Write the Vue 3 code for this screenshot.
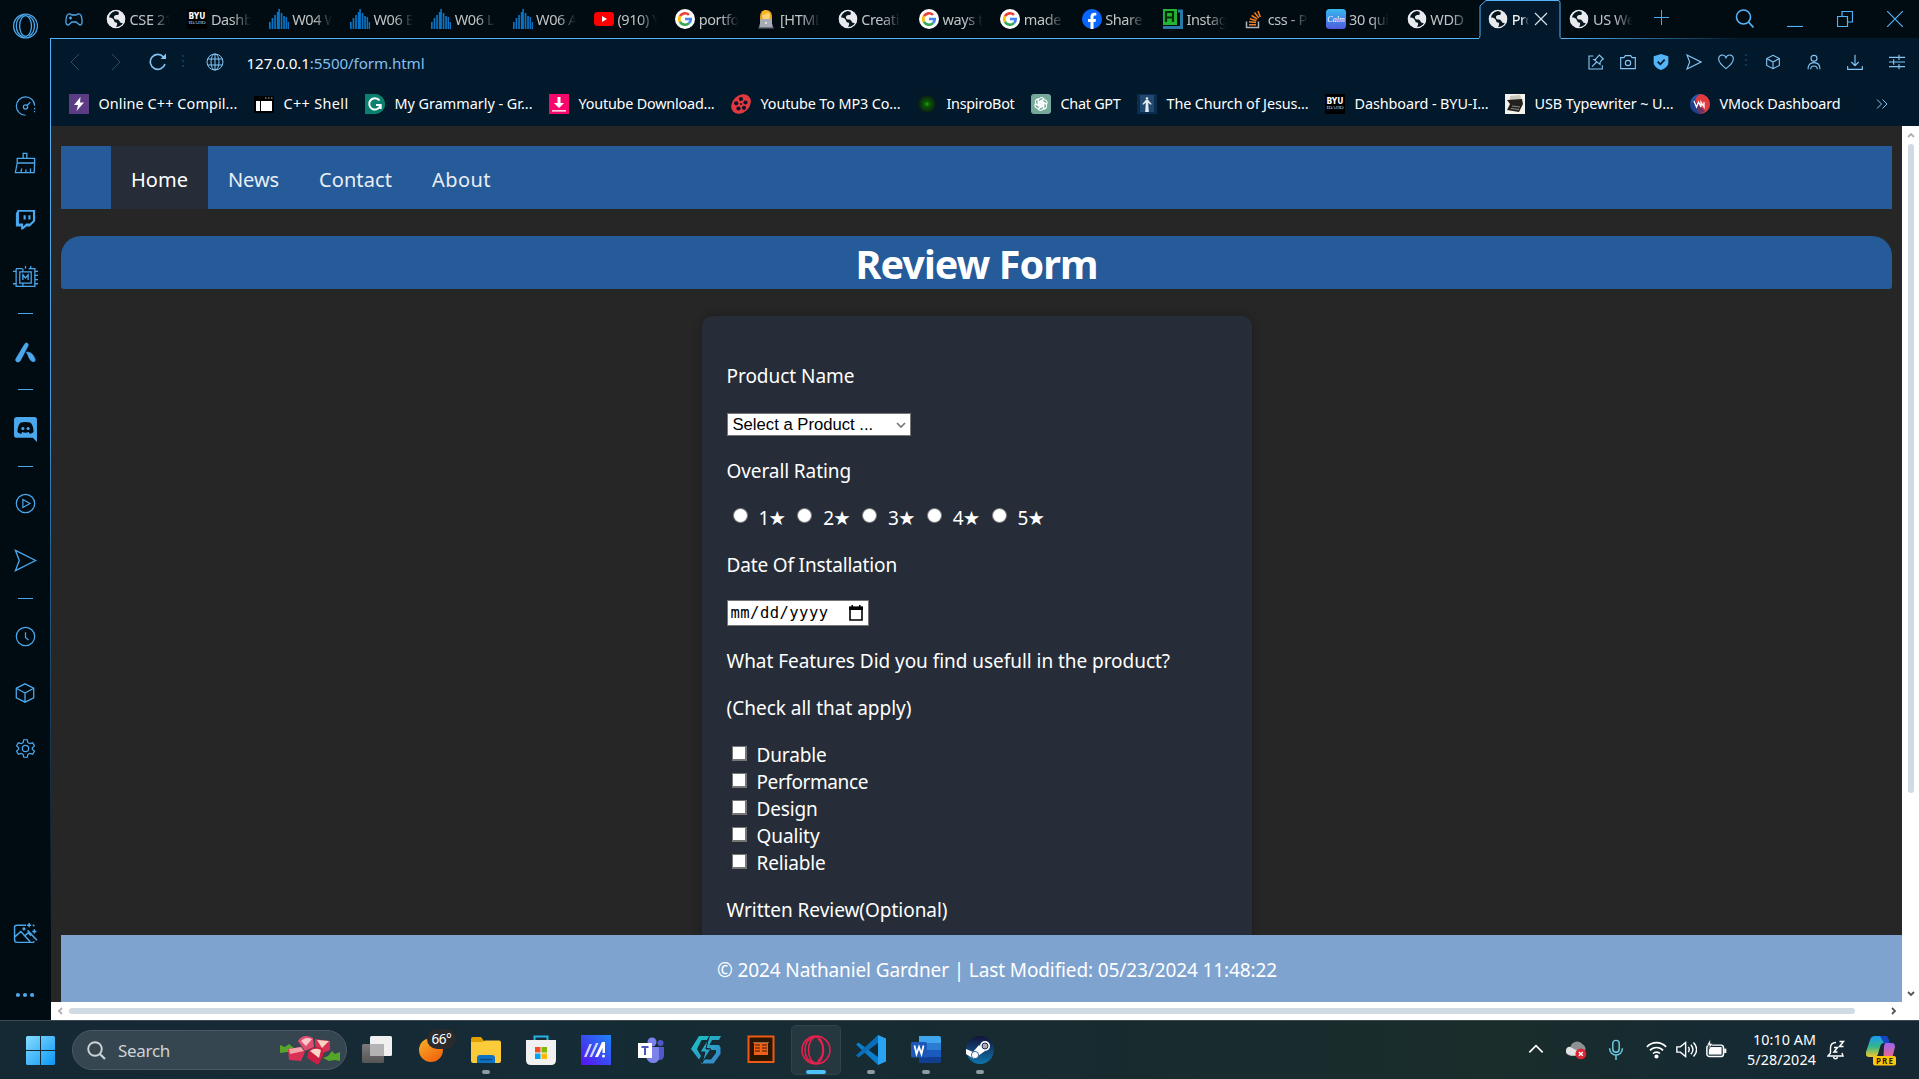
<script setup>
// Spreads a text over the given advance width by adjusting its tracking
const vFit = {
  mounted(el, { value }) {
    const natural = el.getBoundingClientRect().width
    el.style.letterSpacing = (value - natural) / el.textContent.length + 'px'
  },
}

const world = '<circle cx="10" cy="10" r="9" fill="#e8eaed"/><path d="M9 2c-3 1-5.500 3.500-6 6.500 2 0 3.500.5 4.500 2s.5 3 2.500 3c1.500 0 1.500 2 .5 3.500l-.5 1.500c3.500 0 6-2 7.300-4.500-1.800.2-3.300-.3-3.800-1.800-.5-1.300-2-1.700-3.500-1.700S7.500 9 8 7.500 10 6 11.500 6 13 4.500 12.500 2.800C11.500 2 10 1.800 9 2z" fill="#06141d"/><circle cx="10" cy="10" r="8.700" fill="none" stroke="#e8eaed" stroke-width="1.200"/>'
const byu = '<path d="M0 0h20v20H0z" fill="#000"/><text x="10" y="9.500" text-anchor="middle" font-size="8" font-weight="700" font-family="DejaVu Sans, sans-serif" fill="#fff" textLength="17" lengthAdjust="spacingAndGlyphs">BYU</text><text x="10" y="15" text-anchor="middle" font-size="5" font-family="Liberation Serif, serif" fill="#ddd" textLength="17" lengthAdjust="spacingAndGlyphs">IDAHO</text>'
const bars = '<path d="M0 13h1.700v7H0zM2.600 9h1.700v11H2.600zM5.200 6h1.700v14H5.200zM7.800 3h1.500v17H7.800zM9.300 0h1.600v20H9.300zM11.700 4h1.700v16h-1.700zM14.200 7h1.700v13h-1.700zM16.600 8h1.500v12h-1.500zM18.700 13h1.300v7h-1.300z" fill="#0a73c4"/>'
const google = '<circle cx="10" cy="10" r="10" fill="#fff"/><g fill="none" stroke-width="2.700"><path d="M14 5.900A5.700 5.700 0 0 0 5 7.200" stroke="#ea4335"/><path d="M5 7.200a5.700 5.700 0 0 0 0 5.600" stroke="#fbbc05"/><path d="M5 12.800a5.700 5.700 0 0 0 9 1.300" stroke="#34a853"/><path d="M14 14.100A5.600 5.600 0 0 0 15.700 10H10" stroke="#4285f4"/></g>'

const tabs = [
  { t: 'CSE 21', i: world },
  { t: 'Dashb', i: byu },
  { t: 'W04 W', i: bars },
  { t: 'W06 E', i: bars },
  { t: 'W06 L', i: bars },
  { t: 'W06 A', i: bars },
  { t: '(910) Y', i: '<rect x="0" y="3" width="20" height="14" rx="3.500" fill="#f00"/><path d="M8 7v6l5-3z" fill="#fff"/>' },
  { t: 'portfo', i: google },
  { t: '[HTML', i: '<path d="M4 18V8c0-4 2-7 6-7s6 3 6 7v10z" fill="#e9a21b"/><circle cx="10" cy="7" r="4" fill="#ffd479"/><path d="M6 6c3 0 5-1 6-3l2.500 3L14 3 9 1 6 3z" fill="#f6b622"/><path d="M3 18c0-4 3-6 7-6s7 2 7 6z" fill="#8a6fb0"/><rect x="4" y="10" width="12" height="8" rx="1" fill="#a7adb3"/><path d="M2.500 18h15v1.500h-15z" fill="#6d7378"/><circle cx="10" cy="14" r="1" fill="#eee"/>' },
  { t: 'Creati', i: world },
  { t: 'ways t', i: google },
  { t: 'made', i: google },
  { t: 'Share', i: '<circle cx="10" cy="10" r="10" fill="#0866ff"/><path d="M8.500 20v-7H6v-3h2.500V8c0-3 1.500-4.200 4-4.200.8 0 1.400.1 1.800.2v2.600h-1.200c-1.200 0-1.600.5-1.600 1.500V10H14l-.5 3h-2v7z" fill="#fff"/>' },
  { t: 'Instag', i: '<path d="M0 0h14v16H0z" fill="#22b52f"/><path d="M3 13V3h7v10M3 8.500h7" fill="none" stroke="#042a0a" stroke-width="2.200"/><path d="M15 2h3.500v16.500H0" fill="none" stroke="#2878a8" stroke-width="3"/>' },
  { t: 'css - P', i: '<path d="M2.500 12.500v6h12v-6" fill="none" stroke="#aeb3b6" stroke-width="1.500"/><path d="M5 15.700h7M5 12.800l7 .8M5.800 9.700l6.600 2M7.600 6.500l5.800 3.700M10.500 3.500l4.300 5.400M14 2l2.300 6" stroke="#f48024" stroke-width="1.500"/>' },
  { t: '30 qui', i: '<defs><linearGradient id="calm" x2="0" y2="1"><stop stop-color="#38b9ee"/><stop offset="1" stop-color="#4d5cdf"/></linearGradient></defs><rect width="20" height="20" rx="3.500" fill="url(#calm)"/><text x="10" y="13" text-anchor="middle" font-size="8" font-style="italic" font-family="Liberation Serif, serif" fill="#fff">Calm</text>' },
  { t: 'WDD', i: world },
  { t: 'Pro', i: world, active: true },
  { t: 'US We', i: world },
]

const bookmarks = [
  { t: 'Online C++ Compil...', w: 139, i: '<path d="M0 0h20v20H0z" fill="#5c3d84"/><path d="M11.500 3L5 11h4l-1.500 6L15 8.500h-4z" fill="#fff"/>' },
  { t: 'C++ Shell', w: 65, i: '<rect y="2" width="20" height="17" rx="1" fill="#000"/><path d="M2 7h4v10H2zM7 7h11v10H7z" fill="#fff"/><path d="M11 4h1.500M14 4h1.500M17 4h1.500" stroke="#bbb"/>' },
  { t: 'My Grammarly - Gr...', w: 138, i: '<path d="M0 0h10a10 10 0 0 1 0 20H0z" fill="#0a8070"/><circle cx="10" cy="10" r="10" fill="#0a8070"/><path d="M14.500 6.500A5.700 5.700 0 1 0 15.500 11H11M15.700 11v4" fill="none" stroke="#fff" stroke-width="2"/>' },
  { t: 'Youtube Download...', w: 136, i: '<path d="M0 0h20v20H0z" fill="#f7066b"/><path d="M8.500 3h3v6H15l-5 5-5-5h3.500z" fill="#fff"/><path d="M3 16h14v1.700H3z" fill="#ffc9df"/>' },
  { t: 'Youtube To MP3 Co...', w: 140, i: '<ellipse cx="10" cy="10" rx="11" ry="8.500" transform="rotate(-45 10 10)" fill="#e2383f"/><g fill="#03192b"><circle cx="10" cy="5" r="2.100"/><circle cx="14.500" cy="8.500" r="2.100"/><circle cx="13" cy="13.800" r="2.100"/><circle cx="7.500" cy="14.500" r="2.100"/><circle cx="5.200" cy="9.300" r="2.100"/><circle cx="10" cy="10" r="1"/></g>' },
  { t: 'InspiroBot', w: 68, i: '<defs><radialGradient id="eye"><stop stop-color="#14b800"/><stop offset=".25" stop-color="#0d5d0a"/><stop offset="1" stop-color="#0c1913"/></radialGradient></defs><circle cx="10" cy="10" r="9" fill="url(#eye)"/>' },
  { t: 'Chat GPT', w: 60, i: '<rect width="20" height="20" rx="3" fill="#75a99b"/><g fill="none" stroke="#fff" stroke-width="1.100"><path d="M7.500 12V6.500a3 3 0 0 1 5.500-1.500l-4 2.300V12"/><path id="petal" d="M7.500 12V6.500a3 3 0 0 1 5.500-1.500l-4 2.300V12" transform="rotate(60 10 10)"/><path d="M7.500 12V6.500a3 3 0 0 1 5.500-1.500l-4 2.300V12" transform="rotate(120 10 10)"/><path d="M7.500 12V6.500a3 3 0 0 1 5.500-1.500l-4 2.300V12" transform="rotate(180 10 10)"/><path d="M7.500 12V6.500a3 3 0 0 1 5.500-1.500l-4 2.300V12" transform="rotate(240 10 10)"/><path d="M7.500 12V6.500a3 3 0 0 1 5.500-1.500l-4 2.300V12" transform="rotate(300 10 10)"/></g>' },
  { t: 'The Church of Jesus...', w: 142, i: '<path d="M0 0h20v20H0z" fill="#0b2c50"/><path d="M3 1h14v17H3z" fill="#21496f"/><circle cx="10" cy="4.500" r="1.300" fill="#e4ebf2"/><path d="M8.800 6h2.400l3.500 4-.8.8-2.700-2L11.800 18H8.200l.6-9.200-2.700 2-.8-.8z" fill="#e4ebf2"/>' },
  { t: 'Dashboard - BYU-I...', w: 134, i: byu },
  { t: 'USB Typewriter ~ U...', w: 139, i: '<path d="M0 0h20v20H0z" fill="#f5f3ee"/><path d="M5 2l10-1 2 5-12 2z" fill="#ccc8bb"/><path d="M2 6l15-1 1 5-4 8-12-2 3-6z" fill="#22211f"/><path d="M7 12l8 1M6 14.500l8 1" stroke="#8f8b80"/>' },
  { t: 'VMock Dashboard', w: 121, i: '<circle cx="10" cy="10" r="10" fill="#2557a5"/><path d="M10 0a10 10 0 0 1 0 20C6 16 7 12 6 8S7 2 10 0z" fill="#e23a3d"/><path d="M0 9l5-2 10 10-4 3C5 20 0 16 0 9z" fill="#1e2f7a" opacity=".6"/><path d="M4 7l2.500 6L8.500 8l2.500 5V8l3 5V8" fill="none" stroke="#fff" stroke-width="1.300"/>' },
]

const cube = '<path d="M12 2l9.500 4.800v10.400L12 22l-9.500-4.800V6.800zM2.500 6.800L12 12l9.500-5.200M12 12v10"/>'
const send = '<path d="M1.500 1.500L22.500 12 1.500 22.500 5.500 12z"/>'

// Sidebar entries: y is the centre of the glyph, s its size
const side = [
  { y: 25.5, s: 26, i: '<g stroke-width="1.200"><ellipse cx="12.500" cy="12" rx="11" ry="11"/><ellipse cx="12.500" cy="12" rx="5.500" ry="9.500"/><path d="M10.500 1.500C5.500 4 4 8 4 12s1.500 8 6.500 10.500M15.500 2.500c7 4 7 15 0 19"/></g>' },
  { y: 106, s: 21, i: '<path d="M12 22A10.500 10.500 0 1 1 22.500 11"/><path d="M22.500 13.500v2M22.300 17v1.500" /><circle cx="12" cy="12.500" r="2.400"/><path d="M13.800 10.800L17.500 7"/>' },
  { y: 163, s: 22, i: '<path d="M10 7V1.500h4V7M3.500 7h19v5h-19zM3.500 12L1.500 22.500h20.500L22.500 12M7.500 22l1-4M13 22v-3M18 22v-4"/>' },
  { y: 219, s: 21, i: '<path d="M3 1h20v13l-6 6h-4l-4 3.500H7V20H1V5zM4.500 3v13.500h4.800V20l3.500-3.500H17l3.500-3.500V3z" fill="currentColor" fill-rule="evenodd" stroke="none"/><path d="M11 7v5M16.500 7v5" stroke-width="2.400"/>' },
  { y: 277, s: 25, i: '<g stroke-width="1.200"><path d="M3 3.500h6M15 3.500h6v17H3v-17M6.500 6.500h11v11h-11zM9.500 3.500v3M9.500 17.500v3"/><path d="M0 6h3M0 18h3M21 6h3M21 10h3M21 14h3M21 18h3M12 3.500V1M17 3.500V1"/></g><path d="M9.500 14.500v-5l2.500 3 2.500-3v5" stroke-width="1.300"/>' },
  { y: 313, line: true },
  { y: 352, s: 21, i: '<path d="M11 2.500c1-2 3.500-2 4 .3.2 1-.2 2-.8 3L6.500 20.500c-1.200 2.300-3 2.800-4.500 2-1.700-1-1.500-2.500-.6-4zM13 11.500c5-.5 8.500 3.500 10 8.500.6 2.500-2 3-4 1.800-3-1.700-3.500-6.500-6-10.300z" fill="currentColor" stroke="currentColor" stroke-width=".8"/>' },
  { y: 389, line: true },
  { y: 429, s: 25, i: '<path d="M4 0h16.500Q23 0 23 2.500V24l-4-4H4Q1 20 1 17.500V2.500Q1 0 4 0z" fill="currentColor" stroke="none"/><path d="M7 5.500c3-1 7-1 10 0 2 2.500 2.800 5.500 2.700 9-1.200 1-2.200 1.500-3.500 1.700l-1-1.700c-2 .7-4.500.7-6.400 0l-1 1.700c-1.300-.2-2.300-.7-3.500-1.700 0-3.500.7-6.500 2.700-9z" fill="#000b12" stroke="none"/><circle cx="9.500" cy="11" r="1.500" fill="currentColor" stroke="none"/><circle cx="14.500" cy="11" r="1.500" fill="currentColor" stroke="none"/>' },
  { y: 466, line: true },
  { y: 503, s: 21, i: '<circle cx="12" cy="12" r="10.500"/><path d="M9 7.500l8 4.500-8 4.500z"/>' },
  { y: 560, s: 23, i: send },
  { y: 598, line: true },
  { y: 636, s: 21, i: '<circle cx="12" cy="12" r="10.500"/><path d="M12 7v6l3.500 3"/>' },
  { y: 693, s: 22, i: cube },
  { y: 748, s: 21, i: '<path d="M10 2h4l.7 3.200 2.300 1.300 3.200-1 2 3.500-2.400 2.200v1.600l2.400 2.200-2 3.500-3.200-1-2.300 1.300L14 22h-4l-.7-3.200L7 17.500l-3.200 1-2-3.500 2.400-2.200v-1.600L1.800 9l2-3.500 3.200 1 2.300-1.300z"/><circle cx="12" cy="12" r="3.600"/>' },
  { y: 933.5, s: 25, i: '<path d="M12.500 4H4Q1.500 4 1.500 6v12q0 2.500 2.500 2.500h14.500q1.500 0 2-1M2 15l5.500-5 9 10M11.500 14l3-2.500 3 2.500M14 9l9 9.500"/><circle cx="10.500" cy="7.500" r=".8"/><path d="M15.500 2v4M13.500 4h4M20.500 8v4M18.500 10h4M19 3.500l1.500 1.500"/>' },
  { y: 995, s: 20, i: '<g fill="currentColor" stroke="none"><circle cx="3.500" cy="12" r="2.500"/><circle cx="12" cy="12" r="2.500"/><circle cx="20.500" cy="12" r="2.500"/></g>' },
]

const tools = [
  { x: 1588, i: '<path d="M8 3H1.500v19.500h20V17M11 8l6-6.500 6 6-2 1-3 4v3L9 8.500h3zM13 12l-7 7"/>' },
  { x: 1620, i: '<path d="M1 5.500h5l2-3h8l2 3h5V22H1z"/><circle cx="12" cy="13.500" r="4"/>' },
  { x: 1653, i: '<path d="M12 0l11 3.500V13c0 5-5 8.500-11 11C6 21.500 1 18 1 13V3.500z" fill="currentColor" stroke="none"/><path d="M7 11.500l4 4 6.500-7" stroke="#02182b" stroke-width="2.600"/>' },
  { x: 1686, i: send },
  { x: 1718, i: '<path d="M12 22C5 16.500 1 12 1 7.500 1 .5 9.500-.5 12 5.500 14.500-.5 23 .5 23 7.500 23 12 19 16.500 12 22z"/>' },
  { x: 1745, dots: true },
  { x: 1765, i: cube },
  { x: 1806, i: '<circle cx="12" cy="6.500" r="4.500"/><path d="M3 23c0-7 3.500-10 9-10s9 3 9 10M7 23c0-3 1.500-5 5-5s5 2 5 5"/>' },
  { x: 1847, i: '<path d="M12 1v16M6.500 12l5.500 5.500 5.500-5.500M1 18v5h22v-5"/>' },
  { x: 1889, i: '<path d="M0 5h24M0 12h24M0 19h24M15 1v8M7 8v8M15 15v8"/>' },
]

const nav = [
  { t: 'Home', w: 57, on: true },
  { t: 'News', w: 51 },
  { t: 'Contact', w: 73 },
  { t: 'About', w: 59 },
]
const features = [
  { t: 'Durable', w: 70 },
  { t: 'Performance', w: 111.5 },
  { t: 'Design', w: 61 },
  { t: 'Quality', w: 63 },
  { t: 'Reliable', w: 69 },
]

const apps = [
  { n: 'taskview', i: '<defs><linearGradient id="tv" x2="0" y2="1"><stop stop-color="#7b7b7b"/><stop offset="1" stop-color="#555"/></linearGradient></defs><rect y="9" width="22" height="19" rx="1.500" fill="url(#tv)"/><rect x="8" y="1" width="22" height="20" rx="1.500" fill="#f0f0f0"/><path d="M8 9h14v12H8z" fill="#b3b3b3"/>' },
  { n: 'weather', i: '<defs><linearGradient id="sun" x2=".7" y2="1"><stop stop-color="#f7b32c"/><stop offset="1" stop-color="#f2640c"/></linearGradient></defs><circle cx="15" cy="15" r="12" fill="url(#sun)"/>' },
  { n: 'explorer', dot: true, i: '<path d="M0 4q0-2 2-2h8l3 4v6H0z" fill="#e0a100"/><path d="M0 7h11l3-1.500h14q2 0 2 2V26q0 2-2 2H2q-2 0-2-2z" fill="#fccb3a"/><path d="M6 28v-5q0-3 3-3h12q3 0 3 3v5z" fill="#0f71c4"/><path d="M9 24.500h12" stroke="#0a4a86" stroke-width="1.500"/>' },
  { n: 'store', i: '<path d="M8.500 6V1.500h13V6" fill="none" stroke="#29b3e3" stroke-width="2"/><path d="M0 5h30v20q0 5-5 5H5q-5 0-5-5z" fill="#f1f1f1"/><path d="M9 12h5.500v5.500H9z" fill="#f25022"/><path d="M15.500 12H21v5.500h-5.500z" fill="#7fba00"/><path d="M9 18.500h5.500V24H9z" fill="#00a4ef"/><path d="M15.500 18.500H21V24h-5.500z" fill="#ffb900"/>' },
  { n: 'myasus', i: '<defs><linearGradient id="ma" x1="0" y1="1" x2="1" y2="0"><stop stop-color="#5a10f0"/><stop offset="1" stop-color="#1a86f5"/></linearGradient></defs><path d="M0 0h30v30H0z" fill="url(#ma)"/><path d="M3 22l5.500-13h2.500L5.500 22zM8.500 22L15 8h2.500L11 22z" fill="#ccd8ff"/><path d="M14 22l7-15h3v11h-2.500v-5l-4.500 9z" fill="#fff"/><circle cx="22.500" cy="21" r="1.500" fill="#fff"/>' },
  { n: 'teams', i: '<circle cx="16" cy="7" r="4.500" fill="#7b83eb"/><circle cx="24.500" cy="8" r="3" fill="#5059c9"/><path d="M20 12h8v8q0 5-4.500 5H20z" fill="#5059c9"/><path d="M10 12h13v10q0 6-6 6-5 0-7-6z" fill="#7b83eb"/><rect x="2" y="8" width="14" height="15" fill="#fff"/><path d="M5.500 12h7M9 12v8" stroke="#4b53bc" stroke-width="2"/>' },
  { n: 'cleaner', i: '<defs><linearGradient id="th" x2="1" y2="1"><stop stop-color="#15c8c4"/><stop offset="1" stop-color="#3c7fc8"/></linearGradient></defs><path d="M8 1h10l-2 4H10.500L6 14l4 7-2 3.500L0 14zM19 1h11l-2 4h-7l-2.500 5H28l1.500 2.500V19l-7 9.500H10l2-4h8l5-6.500v-3h-8l2-2h-4z" fill="url(#th)"/><path d="M17 4L9 17h5l-3 11 9-14h-5z" fill="url(#th)" stroke="#132631" stroke-width="1"/>' },
  { n: 'reader', i: '<path d="M2.500 1.500h25v25.500h-25z" fill="#2a1500" stroke="#ee5a14" stroke-width="2"/><path d="M8 8h14v12H8z" fill="#f0601a"/><path d="M9 10h5M9 13h5M9 16h5M16 10h5M16 13h5M16 16h5" stroke="#3a1a00" stroke-width="1.200"/><path d="M7 7.500h16" stroke="#8a6a50"/>' },
  { n: 'opera', on: true, i: '<g fill="none" stroke="#e8214f" stroke-width="1.500"><circle cx="15" cy="15" r="14"/><ellipse cx="15" cy="15" rx="7.500" ry="13"/><path d="M13 2C6 4 4 9 4 15s2 11 9 13M17 4c6 5 7 16 0 22"/></g>' },
  { n: 'vscode', dot: true, i: '<path d="M0 9.500l2.500-2L22 22v8z" fill="#0a7dcb"/><path d="M0 20.500l2.500 2L22 8V0z" fill="#0a6db8"/><path d="M22 0l8 3.500v23L22 30z" fill="#27a3f2"/><path d="M22 8.500v13L13.500 15z" fill="#132a34"/>' },
  { n: 'word', dot: true, i: '<path d="M8 1h20q2 0 2 2v5H8z" fill="#41a5ee"/><path d="M8 8h22v7H8z" fill="#2b7cd3"/><path d="M8 15h22v7H8z" fill="#185abd"/><path d="M8 22h22v4q0 2-2 2H8z" fill="#103f91"/><rect y="7" width="16" height="15.500" rx="1.500" fill="#1d57b8"/><path d="M3.500 10.500l2 8.500L8 12l2.500 7 2-8.500" fill="none" stroke="#fff" stroke-width="1.800"/>' },
  { n: 'steam', dot: true, i: '<defs><linearGradient id="st" x2="0" y2="1"><stop stop-color="#15123c"/><stop offset="1" stop-color="#0e75ac"/></linearGradient></defs><circle cx="15" cy="15" r="14" fill="url(#st)"/><path d="M1 14l7 3 6-7 6 6-7 5-4 3-8-5z" fill="#fff"/><circle cx="20" cy="11" r="5" fill="#fff"/><circle cx="20" cy="11" r="3" fill="#aaa" stroke="#192c5c"/><circle cx="10" cy="20" r="3.600" fill="#fff" stroke="#1b4274" stroke-width=".8"/>' },
]

const tray = [
  { x: 1526, s: 20, i: '<path d="M4 16l8-8 8 8" stroke-width="2"/>' },
  { x: 1566, s: 21, i: '<g stroke="none"><path d="M5 19a5 5 0 0 1 0-10 8 8 0 0 1 14-3 6 6 0 0 1 2 9z" fill="#8d9293"/><path d="M4 18a4.500 4.500 0 0 1 1-9l9 5v5H6z" fill="#e0e2e3"/><circle cx="17" cy="17" r="6.200" fill="#d92634"/></g><path d="M14.800 14.800l4.400 4.400M19.200 14.800l-4.400 4.400"/>' },
  { x: 1605, s: 22, i: '<g stroke="#6ccde4"><rect x="8.500" y="1.500" width="7" height="13" rx="3.500"/><path d="M5 10c0 10 14 10 14 0M12 18v5"/></g>' },
  { x: 1645.5, s: 21, i: '<path d="M1 9c6-6.500 16-6.500 22 0M4.500 13c4-4.500 11-4.500 15 0M8 16.500c2-2 6-2 8 0" stroke-width="1.800"/><circle cx="12" cy="20" r="1.600" fill="currentColor"/>' },
  { x: 1675.5, s: 21, i: '<path d="M1 9h4l6-5v16l-6-5H1zM14 9c1.500 2 1.500 4 0 6M17 6.500c3 3.500 3 7.500 0 11M20 4c4.500 5 4.500 11 0 16" stroke-width="1.600"/>' },
  { x: 1705.5, s: 21, i: '<rect x="1" y="7" width="19" height="13" rx="3" stroke-width="1.700"/><rect x="4" y="10" width="13" height="7" fill="currentColor"/><path d="M22 11v5" stroke-width="2.500"/><path d="M5 0L1 7h3L3 12l5-7H5z" fill="currentColor" stroke="#152a33" stroke-width=".7"/>' },
]
</script>

<template>
  <div class="screen">
    <div class="browser">
      <aside class="sidebar">
        <template v-for="(s, k) in side" :key="k">
          <i v-if="s.line" class="rule" :style="{ top: s.y + 'px' }"></i>
          <svg v-else class="glyph" viewBox="0 0 24 24" :width="s.s" :height="s.s"
            :style="{ top: s.y - s.s / 2 + 'px', left: 25 - s.s / 2 + 'px' }" v-html="s.i"></svg>
        </template>
      </aside>

      <div class="main">
        <div class="tabbar">
          <svg class="pad" viewBox="0 0 18 13" width="18" height="13"><path d="M5 1C2 .5 1.500 3 1 7c-.5 5 1.500 6 3.500 4L7 9h4l2.500 2c2 2 4 1 3.500-4-.5-4-1-6.500-4-6-1 0-1 1-2 1H7C6 2 6 1 5 1zM4 5h3M5.500 3.500v3M11.500 5.800h.1M13.300 4h.1" /></svg>
          <div v-for="(t, k) in tabs" :key="k" class="tab" :class="{ active: t.active }">
            <svg v-if="t.active" class="shape" viewBox="0 0 82 40" width="82" height="40"><path d="M0 40V38l1-2V6l6-5.500h72q2 0 2 2V36q0 2 1 2.500V40z" fill="#02182b" stroke="none" /><path d="M-1 38.500q2 0 2-3V6l6-5.500h72q2 0 2 2V36q0 2 1 2.500" stroke="#54b4f8" /></svg>
            <svg class="fav" viewBox="0 0 20 20" width="20" height="20" v-html="t.i"></svg>
            <span class="tt">{{ t.t }}</span>
            <svg v-if="t.active" class="x" viewBox="0 0 14 14" width="14" height="14"><path d="M1 1l12 12M13 1L1 13" stroke="#d5e2ea" stroke-width="1.200" /></svg>
          </div>
          <svg class="plus" viewBox="0 0 16 16" width="16" height="16"><path d="M7.500 0v15M0 7.500h15" /></svg>
          <div class="win">
            <svg viewBox="0 0 20 20" width="20" height="20"><circle cx="8.500" cy="8" r="7" stroke-width="1.600" /><path d="M13.500 13l5 5.500" stroke-width="1.800" /></svg>
            <svg viewBox="0 0 16 16" width="16" height="16"><path d="M0 15.500h16" /></svg>
            <svg viewBox="0 0 16 16" width="16" height="16"><path d="M.5 5.500h10v10H.5zM5 5V.5h10.500V11H11" /></svg>
            <svg viewBox="0 0 16 16" width="16" height="16"><path d="M0 0l16 16M16 0L0 16" /></svg>
          </div>
        </div>

        <div class="toolbar">
          <svg class="dim" viewBox="0 0 10 18" width="10" height="18"><path d="M9 1L1 9l8 8" /></svg>
          <svg class="dim fwd" viewBox="0 0 10 18" width="10" height="18"><path d="M1 1l8 8-8 8" /></svg>
          <svg class="reload" viewBox="0 0 18 18" width="18" height="18"><path d="M16 11a7.500 7.500 0 1 1-1.500-7" /><path d="M11.500 6H17V.5z" fill="currentColor" stroke="none" /></svg>
          <i class="dots"></i>
          <svg class="globe" viewBox="0 0 18 18" width="18" height="18"><circle cx="9" cy="9" r="8" /><ellipse cx="9" cy="9" rx="4" ry="8" /><path d="M9 1v16M1.500 6h15M1.500 12h15" /></svg>
          <div v-fit="178" class="url"><b>127.0.0.1</b>:5500/form.html</div>
          <template v-for="(t, k) in tools" :key="k">
            <i v-if="t.dots" class="dots tool" :style="{ left: t.x - 51 + 'px' }"></i>
            <svg v-else class="tool" :class="{ filled: k === 2 }" viewBox="0 0 24 24" width="16" height="16" :style="{ left: t.x - 51 + 'px' }" v-html="t.i"></svg>
          </template>
        </div>

        <div class="marks">
          <div v-for="(b, k) in bookmarks" :key="k" class="mark">
            <svg viewBox="0 0 20 20" width="20" height="20" v-html="b.i"></svg>
            <span :style="{ width: b.w + 'px' }"><em v-fit="b.w">{{ b.t }}</em></span>
          </div>
          <svg class="more" viewBox="0 0 12 10" width="12" height="10"><path d="M1 .5L5.500 5 1 9.500M6.500 .5L11 5l-4.500 4.500" /></svg>
        </div>

        <div class="view">
          <div class="page">
            <nav>
              <a v-for="n in nav" :key="n.t" :class="{ on: n.on }" :style="{ width: n.w + 'px' }"><span v-fit="n.w">{{ n.t }}</span></a>
            </nav>
            <header><h1 v-fit="242">Review Form</h1></header>
            <form @submit.prevent>
              <p><span v-fit="128">Product Name</span></p>
              <div class="select"><span>Select a Product ...</span><svg viewBox="0 0 10 6" width="10" height="6"><path d="M1 1l4 4 4-4" /></svg></div>
              <p><span v-fit="124.5">Overall Rating</span></p>
              <div class="stars">
                <label v-for="n in 5" :key="n"><i></i>{{ n }}<em>★</em></label>
              </div>
              <p><span v-fit="170.5">Date Of Installation</span></p>
              <div class="date"><span v-fit="98">mm/dd/yyyy</span><svg viewBox="0 0 14 16" width="14" height="16"><path d="M1 2.500h12V15H1z" /><path d="M0 1.500h14V5H0zM2.500 0h1.500v2H2.500zM10 0h1.500v2H10z" fill="#000" stroke="none" /></svg></div>
              <p><span v-fit="443.5">What Features Did you find usefull in the product?</span></p>
              <p><span v-fit="185">(Check all that apply)</span></p>
              <ul>
                <li v-for="f in features" :key="f.t"><i></i><span v-fit="f.w">{{ f.t }}</span></li>
              </ul>
              <p><span v-fit="221">Written Review(Optional)</span></p>
            </form>
            <footer><span v-fit="560">© 2024 Nathaniel Gardner | Last Modified: 05/23/2024 11:48:22</span></footer>
          </div>
          <div class="vscroll">
            <svg viewBox="0 0 8 6" width="8" height="6"><path d="M1 5l3-3 3 3" stroke="#b0b0b0" /></svg>
            <i></i>
            <svg class="end" viewBox="0 0 8 6" width="8" height="6"><path d="M1 1l3 3 3-3" stroke="#555" /></svg>
          </div>
        </div>
        <div class="hscroll">
          <svg viewBox="0 0 6 8" width="6" height="8"><path d="M5 1L2 4l3 3" stroke="#b0b0b0" /></svg>
          <i></i>
          <svg class="end" viewBox="0 0 6 8" width="6" height="8"><path d="M1 1l3 3-3 3" stroke="#555" /></svg>
        </div>
      </div>
    </div>

    <div class="taskbar">
      <svg class="start" viewBox="0 0 30 30" width="30" height="30"><defs><linearGradient id="w" x2="1" y2="1"><stop stop-color="#87dcff" /><stop offset="1" stop-color="#0a97f5" /></linearGradient></defs><path d="M1.500 0H14v14H0V1.500Q0 0 1.500 0zM15 0h12.500Q29 0 29 1.500V14H15zM0 15h14v14H1.500Q0 29 0 27.500zM15 15h14v12.500q0 1.500-1.500 1.500H15z" fill="url(#w)" /></svg>
      <div class="search">
        <svg viewBox="0 0 19 19" width="19" height="19"><circle cx="8" cy="8" r="6.800" stroke-width="1.900" /><path d="M12.700 12.700L18 18" stroke-width="2.200" /></svg>
        <span v-fit="52">Search</span>
        <svg class="fruit" viewBox="0 0 60 30" width="60" height="30"><g stroke="none"><path d="M0 10l5 2 4-3 5 4v6l-7-2-7 1zM60 17l-5 2-3-3-4 5-5 2 6 3 6-1 5 1z" fill="#55a52a" /><path d="M18 6q5-8 15-3l1 9-9 4z" fill="#e04d70" /><path d="M21 6q4-5 11-2l-6 7z" fill="#f9c8c9" /><path d="M35 4l15 2v9l-7 3-8-7z" fill="#d83055" /><path d="M37 5l12 1-7 7z" fill="#f7d3c0" /><path d="M8 14l13-2 4 5-4 9-12-1z" fill="#d93055" /><path d="M9 14l12-2 3 4-14 3z" fill="#f5a4a8" /><path d="M29 15q6-5 14-1v7l-5 9-11-7z" fill="#cc1f43" /><path d="M30 16q5-4 11-1l-2 8z" fill="#f8d8c4" /></g></svg>
      </div>
      <div class="apps">
        <div v-for="a in apps" :key="a.n" class="app" :class="{ on: a.on, run: a.dot }">
          <svg viewBox="0 0 30 30" width="30" height="30" v-html="a.i"></svg>
          <b v-if="a.n === 'weather'" class="temp">66°</b>
        </div>
      </div>
      <svg v-for="(t, k) in tray" :key="k" class="tray" viewBox="0 0 24 24" :width="t.s" :height="t.s" :style="{ left: t.x + 'px' }" v-html="t.i"></svg>
      <div class="clock"><span v-fit="63">10:10 AM</span><span v-fit="69">5/28/2024</span></div>
      <svg class="bell" viewBox="0 0 18 20" width="18" height="20"><path d="M9 2.500C5 2.500 3.500 5 3.500 8v5L1 16h15l-1-3M6.500 17c.5 2.500 3.500 2.500 4 0" stroke-width="1.400" /><path d="M12.500 1.500h4l-4 5h4M7 7.500h3.500L7 12h3.500" stroke-width="1.500" /></svg>
      <svg class="copilot" viewBox="0 0 30 30" width="30" height="30"><defs><linearGradient id="c1" x2="0" y2="1"><stop stop-color="#1b9af0" /><stop offset=".5" stop-color="#33b58d" /><stop offset="1" stop-color="#f3c92b" /></linearGradient><linearGradient id="c2" x2="0" y2="1"><stop stop-color="#9b63f0" /><stop offset="1" stop-color="#f5697b" /></linearGradient></defs><g stroke="none"><path d="M9 0h10q2 0 3 3l1 4h-5q-3 0-4 4l-2 7q-1 3-4 3H3q-4 0-3-5L4 4q1-4 5-4z" fill="url(#c1)" /><path d="M14 0h5q3 0 3.500 3l1 4H18z" fill="#1646c8" /><path d="M19 7h7q3 0 3 4l-2 8q-1 4-4 4h-8q2 0 2.500-3L18 10z" fill="url(#c2)" /><rect x="7" y="20" width="23" height="9.500" rx="2" fill="#fdc60a" /><text x="18.500" y="27.500" text-anchor="middle" font-size="8" font-weight="700" font-family="Noto Sans, sans-serif" fill="#2b2100" textLength="17">PRE</text></g></svg>
    </div>
  </div>
</template>

<style>
body { margin: 0; overflow: hidden; background: #000b12; }
</style>

<style scoped>
.screen { width: 1919px; height: 1079px; display: flex; flex-direction: column; overflow: hidden; font-family: "Noto Sans", "Open Sans", sans-serif; color: #fff; }
svg { display: block; flex: none; fill: none; stroke: currentColor; }
.fav, .mark > svg:not(.more), .app svg { stroke: none; }
em { font-style: normal; }
.browser { display: flex; height: 1020px; flex: none; }

.sidebar { position: relative; width: 51px; flex: none; background: #000b12; color: #4ba8ec; }
.sidebar::after { content: ""; position: absolute; left: 50px; top: 38px; width: 1px; height: 900px; background: linear-gradient(#54b4f8, #4298dc 40%, #2b6a9c 55%, #000b12); }
.glyph { position: absolute; stroke-width: 1.4; }
.rule { position: absolute; left: 18px; width: 15px; height: 1px; background: #4ba8ec; }

.main { width: 1868px; display: flex; flex-direction: column; background: #02182b; }
.tabbar { position: relative; height: 38px; flex: none; display: flex; background: #000b12; }
.tabbar::after { content: ""; position: absolute; left: 0; top: 38px; width: 1690px; height: 1px; background: linear-gradient(90deg, #54b4f8 1510px, transparent); }
.pad { margin: 13px 14.6px 0 14px; color: #4ba8ec; stroke-width: 1.3; }
.tab { position: relative; box-sizing: border-box; width: 81.3px; flex: none; display: flex; padding: 9px 0 0 8.5px; }
.active { z-index: 1; }
.shape { position: absolute; left: -1px; top: 0; z-index: 1; }
.fav { z-index: 2; }
.tt { width: 40px; height: 22px; margin: -1px 0 0 3.5px; overflow: hidden; white-space: nowrap; font-size: 14.5px; line-height: 22px; letter-spacing: -.4px; color: #c2c4c5; -webkit-mask-image: linear-gradient(90deg, #000 55%, transparent); mask-image: linear-gradient(90deg, #000 55%, transparent); }
.active .tt { z-index: 2; width: 17px; color: #fff; }
.x { position: absolute; left: 54.500px; top: 12px; z-index: 2; }
.plus { margin: 10px 0 0 11.5px; color: #4ba8ec; }
.win { position: absolute; left: 1684px; top: 9px; display: flex; color: #54b4f8; stroke-width: 1.2; }
.win svg:nth-child(n + 2) { margin-top: 2px; }
.win svg:nth-child(2) { margin-left: 32px; }
.win svg:nth-child(3), .win svg:nth-child(4) { margin-left: 34px; }

.toolbar { position: relative; box-sizing: border-box; height: 46px; padding: 2px 0 0 19px; display: flex; align-items: center; color: #84c5f5; flex: none; }
.dim { color: #24506f; }
.fwd { margin-left: 31px; }
.reload { margin-left: 28px; stroke-width: 1.6; }
.dots { width: 2px; height: 14px; margin-left: 15px; background: repeating-linear-gradient(#0b3a60 0 2px, transparent 2px 5px); }
.globe { margin-left: 22px; }
.url { margin: 1px 0 0 22.5px; font-size: 15.2px; line-height: 24px; white-space: nowrap; color: #84bfee; }
.url b { font-weight: 400; color: #fff; }
.tool { position: absolute; top: 16px; margin: 0; stroke-width: 1.7; }
.filled { color: #54b4f8; }

.marks { position: relative; height: 42px; padding-left: 18px; display: flex; gap: 16px; align-items: center; margin-top: -1px; flex: none; }
.mark { display: flex; gap: 9.5px; align-items: center; font-size: 14.4px; line-height: 22px; white-space: nowrap; padding-right: .5px; }
.mark span { display: block; }
.mark em { display: inline-block; }
.more { margin-left: 19px; color: #84c5f5; }

.view { height: 876px; margin-top: 1px; display: flex; flex: none; }
.page { position: relative; box-sizing: border-box; width: 1851px; height: 876px; padding: 20px 10px 0; overflow: hidden; background: #262626; }
nav { display: flex; height: 63px; padding-left: 50px; background: #265b9a; }
nav a { height: 63px; padding: 0 20px; line-height: 68px; font-size: 20px; color: #e9eef4; white-space: nowrap; }
nav a.on { background: #262d38; color: #fff; }
nav span, p span, li span, footer span { display: inline-block; }
header { display: flex; justify-content: center; height: 53px; margin-top: 27px; border-radius: 20px 20px 3px 3px; background: #265b9a; }
h1 { margin: 0; font-size: 39.5px; line-height: 57px; font-weight: 700; white-space: nowrap; }
form { box-sizing: border-box; width: 550px; height: 700px; margin: 27px auto 0; padding: 46px 25px 0; border-radius: 10px; background: #262d38; box-shadow: 0 0 10px rgba(0, 0, 0, .25); font-size: 19px; line-height: 29px; white-space: nowrap; }
p { margin: 0 0 20px; height: 27px; }
.select { box-sizing: border-box; width: 184px; height: 23px; margin: 24px 0 21px; padding: 0 4px 0 5px; display: flex; align-items: center; justify-content: space-between; border: 1px solid #767676; background: #fff; color: #000; font: 16.67px/21px "Liberation Sans", Arial, sans-serif; }
.select svg { color: #777; stroke-width: 1.7; }
.stars { display: flex; height: 27px; margin-bottom: 20px; padding-left: 6px; }
.stars label { display: flex; width: 64.75px; }
.stars i { box-sizing: border-box; width: 15px; height: 15px; margin: 4px 11px 0 0; border: 1px solid #767676; border-radius: 50%; background: #fff; }
.stars em { font: 19.5px/29px "DejaVu Sans", sans-serif; margin-left: -1px; }
.date { box-sizing: border-box; width: 142px; height: 26px; margin: 22px 0 21px; padding: 0 5px 0 3px; display: flex; align-items: center; justify-content: space-between; border: 1px solid #767676; background: #fff; color: #000; font: 15.5px/24px "DejaVu Sans Mono", monospace; }
.date svg { stroke-width: 1.6; }
ul { list-style: none; margin: 0 0 20px; padding: 0 0 0 5px; }
li { display: flex; height: 27px; }
li i { box-sizing: border-box; width: 15px; height: 15px; margin: 5px 10px 0 0; border: 1px solid #767676; border-width: 1px 2px 2px 1px; background: #fff; }
footer { position: absolute; left: 10px; top: 809px; width: 1841px; height: 67px; background: #7fa3cf; font-size: 19px; line-height: 70px; white-space: nowrap; }
footer span { margin-left: 656px; }

.vscroll { width: 17px; background: #fff; display: flex; flex-direction: column; align-items: center; padding-top: 6px; box-sizing: border-box; stroke-width: 1.8; }
.vscroll i { width: 6px; height: 649px; margin-top: 6px; border-radius: 3px; background: #d0dae3; }
.vscroll .end { margin-top: 198px; }
.hscroll { height: 18px; background: #fff; display: flex; align-items: center; padding-left: 6px; stroke-width: 1.8; }
.hscroll i { width: 1786px; height: 6px; margin-left: 6px; border-radius: 3px; background: #d0dae3; }
.hscroll .end { margin-left: 36px; }

.taskbar { position: relative; box-sizing: border-box; height: 59px; display: flex; border-top: 1px solid #3d4a50; background: linear-gradient(90deg, #152935, #152b35 30%, #172b30 55%, #1a2d2b 78%, #152a33 90%, #152733); }
.start { margin: 15px 0 0 26px; stroke: none; }
.search { box-sizing: border-box; width: 275px; height: 40px; margin: 9px 0 0 16px; padding-left: 14px; display: flex; align-items: center; border: 1px solid #4b5a62; border-radius: 20px; background: #364650; font-size: 17px; color: #cdd3d7; }
.search span { margin-left: 12px; }
.fruit { margin-left: 110px; }
.apps { display: flex; margin-left: 2px; }
.app { position: relative; width: 55px; height: 58px; display: flex; justify-content: center; padding-top: 14px; box-sizing: border-box; margin-right: -.1px; }
.app svg { position: relative; }
.app.on::before { content: ""; position: absolute; left: 2.5px; top: 4px; width: 50px; height: 50px; box-sizing: border-box; border: 1px solid #30434b; border-radius: 5px; background: #26383f; }
.app.on::after, .app.run::after { content: ""; position: absolute; top: 49px; width: 8px; height: 4px; border-radius: 2px; background: #8f9a9f; }
.app.on::after { width: 20px; background: #4cc2ff; }
.temp { position: absolute; left: 23px; top: 8px; width: 29px; height: 20px; border-radius: 10px; background: #2b2b2d; font-size: 13.5px; font-weight: 400; line-height: 20px; text-align: center; letter-spacing: -.4px; }
.tray { position: absolute; top: 18px; stroke-width: 1.6; }
.clock { position: absolute; right: 103px; top: 8.5px; display: flex; flex-direction: column; align-items: flex-end; font-size: 14.3px; line-height: 20px; white-space: nowrap; }
.bell { position: absolute; left: 1827px; top: 19px; }
.copilot { position: absolute; left: 1866px; top: 15px; }
</style>
